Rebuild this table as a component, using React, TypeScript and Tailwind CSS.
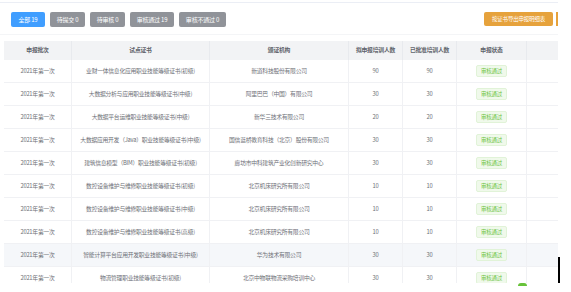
import React from 'react'

interface Row {
  batch: string
  cert: string
  org: string
  planned: number
  approved: number
  status: string
}

const rows: Row[] = [
  { batch: '2021年第一次', cert: '业财一体信息化应用职业技能等级证书(初级)', org: '新道科技股份有限公司', planned: 90, approved: 90, status: '审核通过' },
  { batch: '2021年第一次', cert: '大数据分析与应用职业技能等级证书(中级)', org: '阿里巴巴（中国）有限公司', planned: 30, approved: 30, status: '审核通过' },
  { batch: '2021年第一次', cert: '大数据平台运维职业技能等级证书(中级)', org: '新华三技术有限公司', planned: 20, approved: 20, status: '审核通过' },
  { batch: '2021年第一次', cert: '大数据应用开发（Java）职业技能等级证书(中级)', org: '国信蓝桥教育科技（北京）股份有限公司', planned: 30, approved: 30, status: '审核通过' },
  { batch: '2021年第一次', cert: '建筑信息模型（BIM）职业技能等级证书(初级)', org: '廊坊市中科建筑产业化创新研究中心', planned: 30, approved: 30, status: '审核通过' },
  { batch: '2021年第一次', cert: '数控设备维护与维修职业技能等级证书(初级)', org: '北京机床研究所有限公司', planned: 10, approved: 10, status: '审核通过' },
  { batch: '2021年第一次', cert: '数控设备维护与维修职业技能等级证书(中级)', org: '北京机床研究所有限公司', planned: 10, approved: 10, status: '审核通过' },
  { batch: '2021年第一次', cert: '数控设备维护与维修职业技能等级证书(高级)', org: '北京机床研究所有限公司', planned: 10, approved: 10, status: '审核通过' },
  { batch: '2021年第一次', cert: '智能计算平台应用开发职业技能等级证书(中级)', org: '华为技术有限公司', planned: 30, approved: 30, status: '审核通过' },
  { batch: '2021年第一次', cert: '物流管理职业技能等级证书(初级)', org: '北京中物联物流采购培训中心', planned: 30, approved: 30, status: '审核通过' },
]

const tabs = [
  { label: '全部 19', active: true, w: 'w-[34px]' },
  { label: '待提交 0', active: false, w: 'w-[35px]' },
  { label: '待审核 0', active: false, w: 'w-[35px]' },
  { label: '审核通过 19', active: false, w: 'w-[44px]' },
  { label: '审核不通过 0', active: false, w: 'w-[47px]' },
]

const grid = 'grid grid-cols-[68px_138px_139px_54px_54px_70px_31px]'
const cell = 'flex items-center justify-center border-r border-[#f0f1f4] whitespace-nowrap'

export default function App() {
  return (
    <div className="relative w-[571px] h-[292px] overflow-hidden bg-white font-['Noto_Sans_CJK_SC','Noto_Sans',sans-serif] text-[#6e7077]">
      <div className="w-[558px] pt-[2px]">
        <div className="border-t border-[#ebeef5]" />

        {/* Filter tabs + export */}
        <div className="flex items-start justify-between h-[32px] pt-[9px] pl-[11px] pr-[5px] border-b border-[#f4f5f7]">
          <div className="flex gap-[5px]">
            {tabs.map((t) => (
              <div
                key={t.label}
                className={`${t.w} h-[15px] flex items-center justify-center rounded-[2px] text-[6px] tracking-[-0.2px] text-white ${
                  t.active ? 'bg-[#409eff]' : 'bg-[#909399]'
                }`}
              >
                {t.label}
              </div>
            ))}
          </div>
          <div className="w-[69px] h-[14px] flex items-center justify-center rounded-[2px] bg-[#e6a23c] text-[5.5px] tracking-[-0.2px] text-white">
            按证书导出申报明细表
          </div>
        </div>

        {/* Table */}
        <div className="ml-[4px] mt-[6px] h-[242px] overflow-hidden">
          <div className={`${grid} h-[19px] bg-[#f2f3f5] text-[5.8px] font-bold tracking-[-0.2px] text-[#60636b]`}>
            {['申报批次', '试点证书', '颁证机构', '拟申报培训人数', '已批准培训人数', '申报状态', ''].map((h, i) => (
              <div key={i} className="flex items-center justify-center border-r border-[#e8eaee] last:border-r-0">
                {h}
              </div>
            ))}
          </div>
          {rows.map((r, i) => (
            <div
              key={i}
              className={`${grid} h-[23px] text-[5.8px] tracking-[-0.25px] border-b border-[#f0f1f4] ${i === 8 ? 'bg-[#f5f7fa]' : ''}`}
            >
              <div className={cell}>{r.batch}</div>
              <div className={cell}>{r.cert}</div>
              <div className={cell}>{r.org}</div>
              <div className={cell}>{r.planned}</div>
              <div className={cell}>{r.approved}</div>
              <div className={cell}>
                <span className="h-[12px] w-[31px] flex items-center justify-center rounded-[2px] border border-[#e1f3d8] bg-[#f0f9eb] text-[#67c23a] text-[5.5px]">
                  {r.status}
                </span>
              </div>
              <div />
            </div>
          ))}
        </div>
      </div>

      {/* clipped edge details */}
      <div className="absolute left-[556px] top-[12px] w-[2px] h-[14px] bg-[#e6a23c]" />
      <div className="absolute left-[558px] top-[257px] w-[2px] h-[26px] bg-black" />
      <div className="absolute left-[518px] top-[283px] w-[9px] h-[3px] rounded-t-full bg-[#67c23a]" />
    </div>
  )
}
